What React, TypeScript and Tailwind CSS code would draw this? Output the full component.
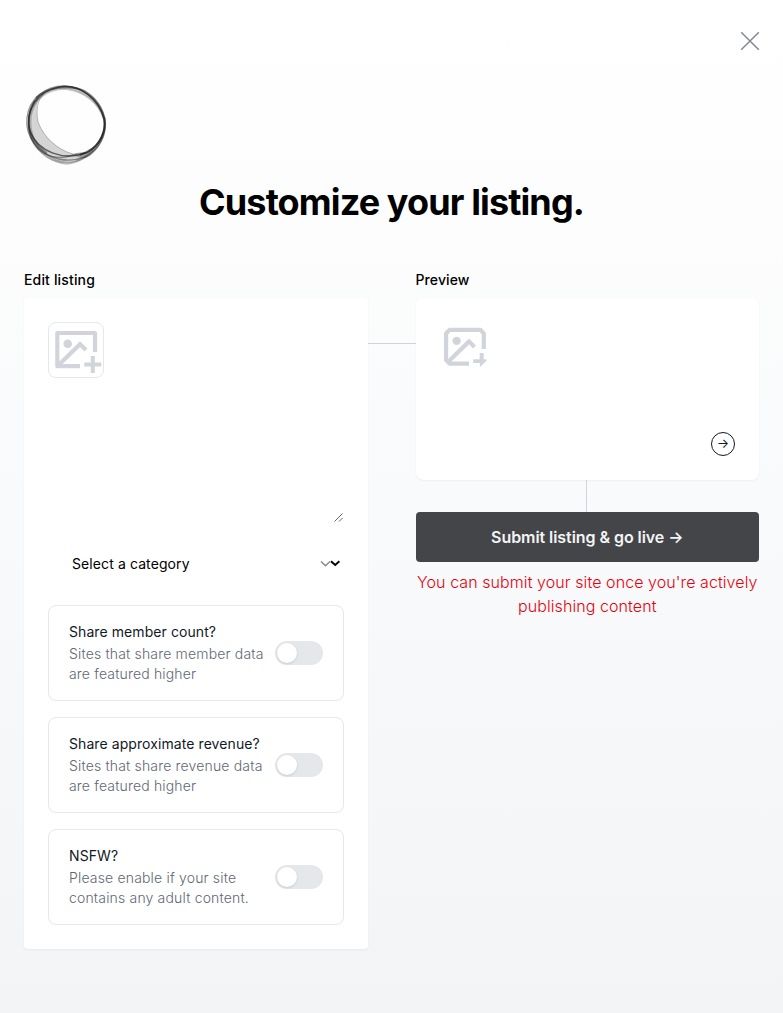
import React from "react";

function CloseIcon() {
  return (
    <svg width="20" height="20" viewBox="0 0 20 20" fill="none" stroke="#858994" strokeWidth="1.5">
      <path d="M1.2 1.2 18.8 18.8M18.8 1.2 1.2 18.8" />
    </svg>
  );
}

function Logo() {
  return (
    <svg width="84" height="84" viewBox="8 6 84 84" fill="none">
      <path
        d="M25 17C11 30 8 50 16 66C25 82 42 90 56 87C66 85 73 81 79 73C70 78 63 79 57 78C42 74 28 62 22 46C20 36 20 27 25 17Z"
        fill="#555"
        fillOpacity=".24"
      />
      <path d="M57 78C64 79 72 77 79 69C84 63 88 56 90 47C90 62 82 74 74 80C67 84 62 82 57 78Z" fill="#333" fillOpacity=".3" />
      <g stroke="#1c1c1c">
        <path strokeOpacity=".65" strokeWidth="1.5" d="M72 76C48 86 22 76 14 55C8 34 22 15 43 11C64 7 83 24 88 43C90 54 85 68 72 76Z" />
        <path strokeOpacity=".45" strokeWidth="1.4" d="M43 83C22 78 9 60 11 42C13 23 29 10 48 10C68 11 84 25 89 43C91 60 83 74 69 81C61 84 51 85 43 83Z" />
        <path strokeOpacity=".25" strokeWidth="1.4" d="M40 84C20 75 13 58 15 40C18 23 32 13 49 13C69 15 83 28 88 44C90 58 83 71 69 80C61 87 50 88 40 84Z" />
        <path strokeOpacity=".25" strokeWidth="1.4" d="M51 88C31 86 17 72 13 53C11 34 22 16 42 12C61 10 81 22 88 42C92 62 76 85 51 88Z" />
        <path strokeOpacity=".28" d="M57 78C42 74 28 62 22 46C20 34 21 25 28 17" />
        <path strokeOpacity=".45" strokeWidth="1.3" d="M19 24C10 40 10 60 22 73C31 81 43 83 54 80C60 77 65 77 70 77" />
        <path strokeOpacity=".55" strokeWidth="2.2" d="M20 22C31 11 53 8 68 15C80 22 87 33 89 46C89 54 87 60 83 66C79 72 72 76 64 79" />
        <path strokeOpacity=".4" strokeWidth="1.8" d="M21 22C13 31 12 41 13 51C15 63 22 71 31 77" />
      </g>
    </svg>
  );
}

function AddImageIcon() {
  return (
    <svg width="54" height="54" viewBox="1 1 54 54" fill="none" stroke="#d1d5db" strokeWidth="4.2">
      <path d="M47 30V11H9.3V44.2H32" strokeLinejoin="round" />
      <path d="M9.3 44.2 32 22.2 38 28" />
      <path d="M44.8 34v17M36.3 42.5h17" strokeWidth="4" />
      <circle cx="19.7" cy="21.7" r="4.3" fill="#d1d5db" stroke="none" />
    </svg>
  );
}

function PreviewImageIcon() {
  return (
    <svg width="56" height="56" viewBox="0 0 56 56" fill="none" stroke="#d1d5db" strokeWidth="4.2">
      <path d="M43.8 27V11.5L40.5 7.9H9.5L6.1 11.5V38L9.5 41.6H29" strokeLinejoin="round" />
      <path d="M7 41 29 19.4 34.5 25" />
      <path d="M33.2 37.3H39.7V31H43.7V37.3H46.4V39L39.9 45V41H33.2Z" fill="#d1d5db" stroke="none" />
      <circle cx="16.6" cy="18.9" r="4.2" fill="#d1d5db" stroke="none" />
    </svg>
  );
}

function ToggleRow({ title, text }: { title: string; text: string }) {
  return (
    <div className="flex h-24 items-center rounded-lg border border-[#e5e7eb] px-5">
      <div className="flex-1 text-sm">
        <div className="mb-0.5 tracking-[0.08px] text-[#111827]">{title}</div>
        <p className="w-[202px] font-light tracking-[0.17px] text-[#606773]">{text}</p>
      </div>
      <button type="button" className="flex h-6 w-12 shrink-0 items-center rounded-full bg-[#e5e7eb] px-0.5">
        <span className="size-5 rounded-full bg-white shadow-sm" />
      </button>
    </div>
  );
}

export default function App() {
  return (
    <div className="flex h-[1013px] flex-col bg-linear-to-b from-white via-[#f9fafb] to-[#f3f4f6] px-6 font-['Inter',sans-serif] text-black">
      <div className="-mr-px flex h-[82px] shrink-0 justify-end pt-[31px]">
        <CloseIcon />
      </div>
      <Logo />
      <h1 className="mt-4 text-center text-4xl/10 font-bold tracking-[-0.88px]">Customize your listing.</h1>
      <div className="mt-12 grid grid-cols-2 items-start gap-x-12">
        <section>
          <h2 className="text-sm font-medium tracking-[0.16px]">Edit listing</h2>
          <div className="mt-2 h-[651px] rounded bg-white p-6 shadow-xs">
            <div className="flex size-14 items-center justify-center rounded-lg border border-[#e5e7eb]">
              <AddImageIcon />
            </div>
            <div className="flex h-[146px] items-end justify-end pr-px">
              <svg width="9" height="9" viewBox="0 0 9 9" stroke="#555" strokeWidth="0.9" className="mb-0.5">
                <path d="M.5 8.5 8.5.5M5 8.5 8.5 5" />
              </svg>
            </div>
            <div className="mt-[30px] mb-[31px] flex h-5 items-center pr-1 pl-6 text-sm">
              <span className="flex-1 tracking-[0.1px]">Select a category</span>
              <svg width="20" height="8" viewBox="0 0 20 8" fill="none">
                <path d="M1 1.5l4.5 4.2L10 1.5" stroke="#858b96" strokeWidth="1.5" />
                <path d="M11 1.3l4.2 3.7 4.2-3.7" stroke="#000" strokeWidth="2" />
              </svg>
            </div>
            <div className="space-y-4">
              <ToggleRow title="Share member count?" text="Sites that share member data are featured higher" />
              <ToggleRow title="Share approximate revenue?" text="Sites that share revenue data are featured higher" />
              <ToggleRow title="NSFW?" text="Please enable if your site contains any adult content." />
            </div>
          </div>
        </section>
        <section className="relative">
          <h2 className="text-sm font-medium tracking-[0.12px]">Preview</h2>
          <div className="absolute top-[73px] right-full h-px w-12 bg-[#d1d5db]" />
          <div className="mt-2 flex h-[182px] flex-col justify-between rounded-lg bg-white p-6 shadow-xs">
            <PreviewImageIcon />
            <div className="flex size-6 items-center justify-center self-end rounded-full border border-[#111827] text-[13px] text-[#111827]">
              →
            </div>
          </div>
          <div className="ml-[170.5px] h-8 w-px bg-[#d1d5db]" />
          <button type="button" className="flex h-[50px] w-full items-center justify-center rounded bg-[#444548] font-semibold tracking-[-0.06px] text-[#f3f4f6]">
            Submit listing &amp; go live →
          </button>
          <p className="mt-2 text-center font-light tracking-[0.08px] text-[#e8000b]">You can submit your site once you're actively publishing content</p>
        </section>
      </div>
    </div>
  );
}
